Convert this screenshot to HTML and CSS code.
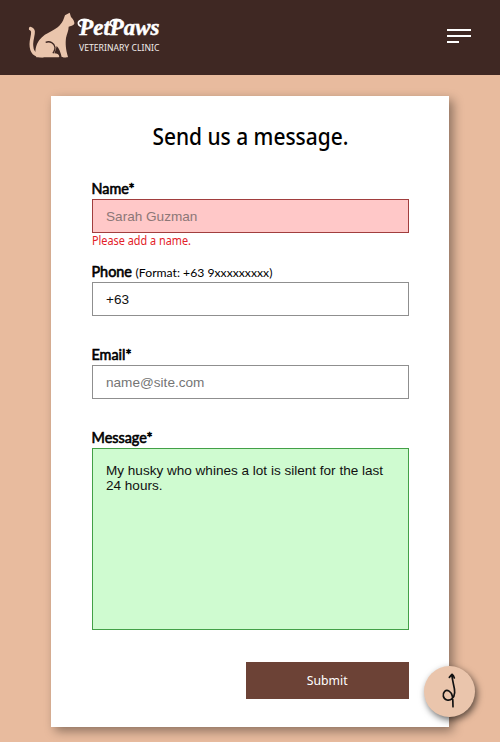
FILE: index.html
```html
<!DOCTYPE html>
<html lang="en">
<head>
<meta charset="utf-8">
<title>PetPaws Veterinary Clinic</title>
<link rel="stylesheet" href="styles.css">
</head>
<body>
<header class="header">
  <svg class="logo" viewBox="0 0 450 222" role="img" aria-label="PetPaws Veterinary Clinic">
    <path class="cat-tail" d="M32 86C47 90 34 112 34 132C34 156 43 167 67 167"/>
    <path class="cat" d="M49 170C43 157 47 135 58 120C68 107 80 101 95 93C113 84 126 72 132 54L135 46L149 38L153 51C160 57 164 66 163 71C160 77 151 77 146 80C146 92 140 102 138 114C136 130 137 147 144 171C141 173 128 173 125 171C122 157 117 145 110 138C108 148 105 155 103 160C111 160 117 163 118 170L116 172L49 172Z"/>
    <path class="cat-leg" d="M77 127C90 122 103 129 105 142C106 151 101 154 99 160"/>
    <text class="brand" x="178" y="106" textLength="240" lengthAdjust="spacingAndGlyphs">PetPaws</text>
    <path class="swash" d="M206 60C179 53 166 70 182 79M302 60C275 53 262 70 278 79"/>
    <text class="tagline" x="177" y="153" textLength="241" lengthAdjust="spacingAndGlyphs">VETERINARY CLINIC</text>
  </svg>
  <button class="menu" type="button" aria-label="Menu"><i></i><i></i><i></i></button>
</header>
<main class="card">
  <h1 class="title"><span>Send us a message.</span></h1>
  <form novalidate>
    <div class="field">
      <label for="name">Name*</label>
      <input class="invalid" id="name" placeholder="Sarah Guzman">
      <p class="error"><span>Please add a name.</span></p>
    </div>
    <div class="field">
      <label for="phone">Phone <small>(Format: +63 9xxxxxxxxx)</small></label>
      <input id="phone" value="+63">
    </div>
    <div class="field">
      <label for="email">Email*</label>
      <input id="email" placeholder="name@site.com">
    </div>
    <div class="field message">
      <label for="message">Message*</label>
      <textarea id="message">My husky who whines a lot is silent for the last 24 hours.</textarea>
    </div>
    <button class="submit" type="button"><span>Submit</span></button>
  </form>
</main>
<a class="to-top" href="#" aria-label="Back to top">
  <svg viewBox="0 0 153 153"><path d="M76 34Q81 29 84 25Q89 28 91 36M84 25C83 45 93 61 92 80C91 96 80 105 69 102C57 99 54 84 62 76C70 69 82 77 85 90Q87 103 87 122"/></svg>
</a>
</body>
</html>
```

FILE: styles.css
```css
* { box-sizing: border-box; }
body {
  margin: 0;
  height: 742px;
  overflow: hidden;
  background: #e8bb9e;
  color: #000;
  font-family: Lato, sans-serif;
}
.header {
  height: 74.5px;
  padding: 0 29px 0 20px;
  display: flex;
  justify-content: space-between;
  background: #3f2823;
}
.logo { width: 150px; height: 74px; }
.cat { fill: #eac5ac; }
.cat-tail { fill: none; stroke: #eac5ac; stroke-width: 11; stroke-linecap: round; }
.cat-leg { fill: none; stroke: #3f2823; stroke-width: 4; }
.brand { font: italic bold 72px "Liberation Serif", serif; fill: #fff; stroke: #fff; stroke-width: 1.5; }
.swash { fill: none; stroke: #fff; stroke-width: 5; stroke-linecap: round; }
.tagline { font: 27px "Noto Sans", sans-serif; fill: #f3eeec; }
.menu {
  width: 24px;
  margin: 28.5px 0 0;
  padding: 0;
  display: flex;
  flex-direction: column;
  gap: 4px;
  border: 0;
  background: none;
}
.menu i { width: 24px; height: 2px; background: #fff; }
.menu i:last-child { width: 12px; }
.card {
  width: 398px;
  height: 631px;
  margin: 21.5px auto 0 51px;
  padding: 23px 40.5px 0;
  background: #fff;
  box-shadow: 4px 4px 10px rgba(0, 0, 0, .4);
}
.title {
  margin: 0 0 26px;
  height: 34px;
  line-height: 34px;
  font-family: "Noto Sans", sans-serif;
  font-size: 24px;
  font-weight: 500;
  text-align: center;
  white-space: nowrap;
}
.title span { display: inline-block; transform: scaleX(.872); }
.field { height: 83px; }
.field label {
  display: block;
  height: 20px;
  line-height: 20px;
  font-size: 14.4px;
  font-weight: 400;
  -webkit-text-stroke: .6px #000;
}
.field small { font-size: 12.2px; -webkit-text-stroke: 0; }
input, textarea {
  display: block;
  width: 100%;
  margin: 0;
  border: 1px solid #8f8f8f;
  border-radius: 0;
  outline: 0;
  font-family: "Liberation Sans", sans-serif;
  color: #111;
  resize: none;
}
input { height: 34px; padding: 0 13.5px; font-size: 13.6px; }
::placeholder { color: #757575; opacity: 1; }
.invalid { background: #ffc8c8; border-color: #a13e3e; }
.invalid::placeholder { color: #8c7777; }
.error {
  margin: 0;
  line-height: 16px;
  font-family: "Noto Sans", sans-serif;
  font-size: 12px;
  color: #e32128;
  white-space: nowrap;
}
.error span { display: inline-block; transform: scaleX(.905); transform-origin: left; }
.message { height: 233.5px; }
textarea {
  height: 182px;
  padding: 14px 13.5px;
  line-height: 15px;
  font-size: 13.55px;
  background: #cffbd0;
  border-color: #43a047;
}
.submit {
  display: block;
  width: 162.5px;
  height: 37.5px;
  margin: 0 0 0 auto;
  padding: 0;
  border: 0;
  background: #6c4236;
  color: #fff;
  font-family: "Noto Sans", sans-serif;
  font-size: 13.3px;
}
.submit span { display: inline-block; transform: scaleX(.92); }
.to-top {
  position: fixed;
  left: 424px;
  top: 666px;
  width: 51px;
  height: 51px;
  border-radius: 50%;
  background: #eac5ac;
  box-shadow: 2px 3px 7px rgba(0, 0, 0, .6);
}
.to-top svg { display: block; width: 51px; height: 51px; }
.to-top path { fill: none; stroke: #111; stroke-width: 5; stroke-linecap: round; stroke-linejoin: round; }
```
